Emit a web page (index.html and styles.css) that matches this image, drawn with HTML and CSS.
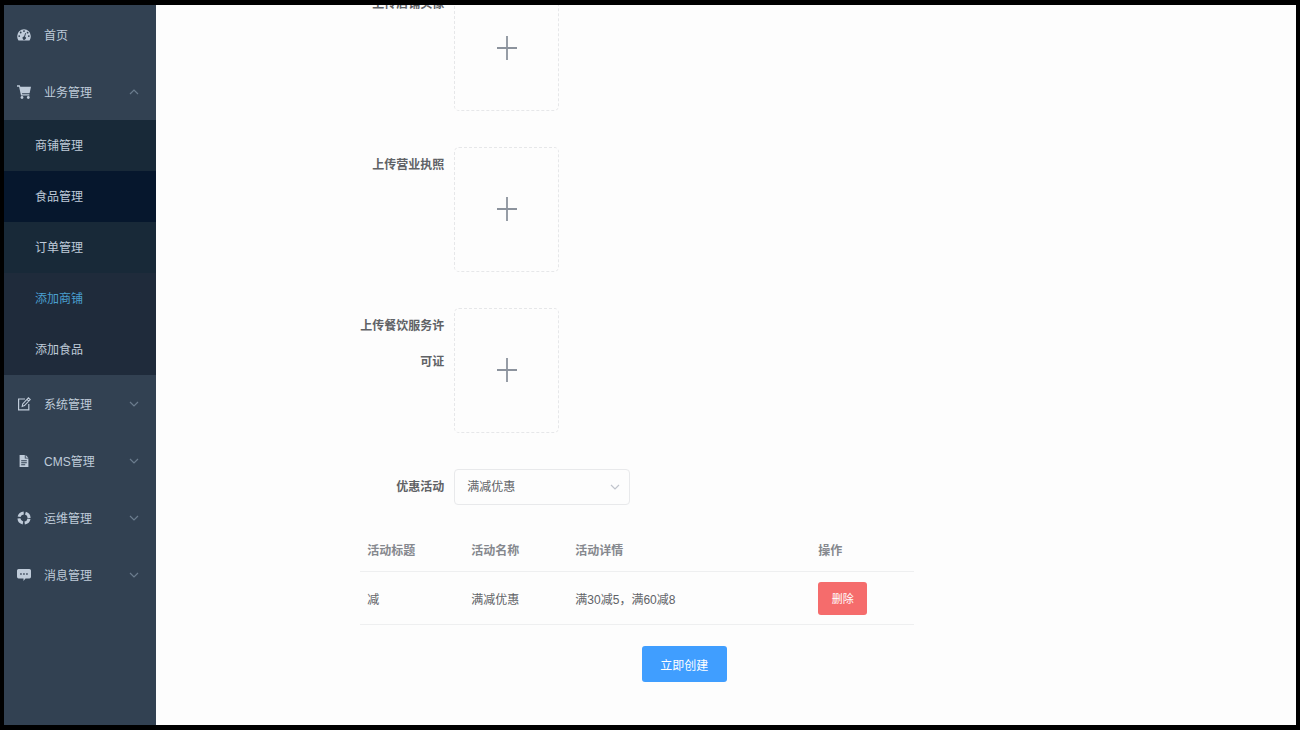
FILE: index.html
```
<!DOCTYPE html>
<html lang="zh-CN">
<head>
  <meta charset="UTF-8" />
  <meta name="viewport" content="width=device-width, initial-scale=1.0" />
  <title>添加商铺</title>
  <link rel="stylesheet" href="styles.css">
</head>
<body>
  <svg class="sprite" aria-hidden="true">
    <symbol id="arrow" viewBox="0 0 10 6"><path d="M1 1l4 4 4-4" fill="none" stroke="currentColor" stroke-width="1.2" /></symbol>
    <symbol id="plus" viewBox="0 0 20 24"><path d="M10 0v24M0 12h20" fill="none" stroke="currentColor" stroke-width="1.8" /></symbol>
  </svg>
  <div class="frame">
    <nav class="sidebar">
      <a href="#" class="item">
        <svg class="icon" viewBox="0 0 14 14"><path fill="currentColor" fill-rule="evenodd" d="M7 1.2a6.8 6.8 0 0 0-6.8 6.8c0 1.7.5 3.2 1.3 4.5h11c.8-1.3 1.3-2.8 1.3-4.5A6.8 6.8 0 0 0 7 1.2zM7 2.2a.9.9 0 1 1 0 1.8.9.9 0 0 1 0-1.8zM3.7 3.6a.9.9 0 1 1 0 1.8.9.9 0 0 1 0-1.8zM10.6 3.8a.9.9 0 1 1 0 1.8.9.9 0 0 1 0-1.8zM2.2 7.2a.9.9 0 1 1 0 1.8.9.9 0 0 1 0-1.8zM11.8 7.2a.9.9 0 1 1 0 1.8.9.9 0 0 1 0-1.8zM8.2 5l.8.3-1 3.4a1.6 1.6 0 1 1-.9-.2z" /></svg>
        <span>首页</span>
      </a>
      <a href="#" class="item">
        <svg class="icon" viewBox="0 0 14 14"><path fill="currentColor" d="M0 .3h2.8l.5 1.5H14l-1.4 6.4H5l.2 1.1h7.2v1.3H4L2.1 1.7H0z" /><circle cx="5" cy="12.5" r="1.4" fill="currentColor" /><circle cx="11.3" cy="12.5" r="1.4" fill="currentColor" /></svg>
        <span>业务管理</span>
        <svg class="arrow up"><use href="#arrow" /></svg>
      </a>
      <div class="submenu">
        <a href="#">商铺管理</a>
        <a href="#" class="hover">食品管理</a>
        <a href="#">订单管理</a>
        <a href="#" class="lower active">添加商铺</a>
        <a href="#" class="lower">添加食品</a>
      </div>
      <a href="#" class="item">
        <svg class="icon" viewBox="0 0 14 14"><path fill="none" stroke="currentColor" stroke-width="1.2" d="M8 2H1.6v10.8h10.2V7" /><path fill="none" stroke="currentColor" stroke-width="1.1" d="M5.2 9.4l.5-2.5L11.4.9l1.8 1.7-5.7 6zM10 2.4l1.8 1.7" /></svg>
        <span>系统管理</span>
        <svg class="arrow"><use href="#arrow" /></svg>
      </a>
      <a href="#" class="item">
        <svg class="icon" viewBox="0 0 14 14"><path fill="currentColor" fill-rule="evenodd" d="M2.6 1h5.2v3.6h3.6V13H2.6zM4.2 6.2v1h5.6v-1zM4.2 8.2v1h5.6v-1zM4.2 10.2v1h4v-1z" /><path fill="currentColor" d="M8.6 1l2.8 2.8H8.6z" /></svg>
        <span>CMS管理</span>
        <svg class="arrow"><use href="#arrow" /></svg>
      </a>
      <a href="#" class="item">
        <svg class="icon" viewBox="0 0 14 14"><circle cx="7" cy="7" r="5.1" fill="none" stroke="currentColor" stroke-width="3" stroke-dasharray="6.2 1.81" stroke-dashoffset="-.9" /></svg>
        <span>运维管理</span>
        <svg class="arrow"><use href="#arrow" /></svg>
      </a>
      <a href="#" class="item">
        <svg class="icon" viewBox="0 0 14 14"><path fill="currentColor" fill-rule="evenodd" d="M1.6 1h10.8A1.6 1.6 0 0 1 14 2.6v6.2a1.6 1.6 0 0 1-1.6 1.6H8.500L6.500 13v-2.600H1.600A1.600 1.600 0 0 1 0 8.800V2.600A1.600 1.600 0 0 1 1.600 1zM3.200 5.200v1.500h1.500V5.200zM6.200 5.200v1.500h1.500V5.200zM9.200 5.200v1.500h1.500V5.200z" /></svg>
        <span>消息管理</span>
        <svg class="arrow"><use href="#arrow" /></svg>
      </a>
    </nav>

    <main class="content">
      <form class="shop-form">
        <div class="row">
          <label for="avatar">上传店铺头像</label>
          <div class="upload">
            <svg><use href="#plus" /></svg>
            <input type="file" id="avatar" />
          </div>
        </div>
        <div class="row">
          <label for="license">上传营业执照</label>
          <div class="upload">
            <svg><use href="#plus" /></svg>
            <input type="file" id="license" />
          </div>
        </div>
        <div class="row">
          <label for="permit">上传餐饮服务许可证</label>
          <div class="upload">
            <svg><use href="#plus" /></svg>
            <input type="file" id="permit" />
          </div>
        </div>
        <div class="row">
          <label for="activity">优惠活动</label>
          <div class="select">
            <select id="activity">
              <option>满减优惠</option>
            </select>
            <svg class="arrow"><use href="#arrow" /></svg>
          </div>
        </div>
        <table>
          <thead>
            <tr>
              <th class="short">活动标题</th>
              <th class="short">活动名称</th>
              <th>活动详情</th>
              <th class="action">操作</th>
            </tr>
          </thead>
          <tbody>
            <tr>
              <td>减</td>
              <td>满减优惠</td>
              <td>满30减5，满60减8</td>
              <td><button type="button" class="delete">删除</button></td>
            </tr>
          </tbody>
        </table>
        <div class="submit">
          <button type="button" class="create">立即创建</button>
        </div>
      </form>
    </main>
  </div>
</body>
</html>
```
FILE: styles.css
```
:root {
  --menu: #324152;
  --submenu: #182938;
  --submenu-low: #1f2b3b;
  --menu-text: #bfcbd9;
  --line: #eeeff0;
  --text: #606266;
  --label-width: 94px;
}

* {
  margin: 0;
  padding: 0;
  box-sizing: border-box;
}

body {
  background: #000;
  color: var(--text);
  font-family: "Liberation Sans", "Noto Sans CJK SC", sans-serif;
  font-size: 12px;
}

button, select {
  font: inherit;
}

.sprite {
  display: none;
}

.frame {
  display: flex;
  height: 100vh;
  padding: 5px 4px;
}

/* sidebar */
.sidebar {
  flex: none;
  width: 152px;
  padding-top: 1px;
  background: var(--menu);
  overflow: hidden;
}

.sidebar a {
  color: var(--menu-text);
  text-decoration: none;
}

.item {
  display: flex;
  align-items: center;
  gap: 13px;
  height: 57px;
  padding: 0 17px 0 13px;
}

.icon {
  flex: none;
  width: 14px;
  height: 14px;
}

.arrow {
  width: 10px;
  height: 6px;
  color: #6b7c8e;
}

.item .arrow {
  margin-left: auto;
}

.arrow.up {
  transform: rotate(180deg);
}

.submenu a {
  display: block;
  height: 51px;
  padding-left: 31px;
  line-height: 53px;
  background: var(--submenu);
}

.submenu .hover {
  background: #06172d;
}

.submenu .lower {
  background: var(--submenu-low);
}

.submenu .active {
  color: #4a9fcf;
}

.content {
  flex: 1;
  display: flex;
  flex-direction: column;
  justify-content: flex-end;
  padding: 0 16px 43px;
  background: #fdfdfd;
  overflow: hidden;
}

.shop-form {
  width: 50%;
  margin-left: 17%;
}

.row {
  display: flex;
  align-items: flex-start;
  margin-bottom: 36px;
}

.row label {
  flex: none;
  width: var(--label-width);
  padding-right: 10px;
  line-height: 36px;
  font-weight: bold;
  text-align: right;
}

.upload {
  position: relative;
  display: flex;
  align-items: center;
  justify-content: center;
  width: 105px;
  height: 125px;
  border: 1px dashed #e6e7e9;
  border-radius: 5px;
}

.upload svg {
  width: 20px;
  height: 24px;
  color: #8c939d;
}

.upload input {
  position: absolute;
  inset: 0;
  width: 100%;
  opacity: 0;
  cursor: pointer;
}

.select {
  position: relative;
  width: 176px;
}

.select select {
  display: block;
  width: 100%;
  height: 36px;
  padding: 0 12px;
  border: 1px solid #e8e9eb;
  border-radius: 4px;
  background: transparent;
  color: var(--text);
  appearance: none;
}

.select .arrow {
  position: absolute;
  top: 15px;
  right: 10px;
  color: #c0c4cc;
  pointer-events: none;
}

table {
  width: 100%;
  margin-top: -12px;
  border-collapse: collapse;
  table-layout: fixed;
}

th, td {
  padding: 0 7px;
  border-bottom: 1px solid var(--line);
  text-align: left;
}

th {
  height: 43px;
  color: #85888e;
}

td {
  height: 53px;
}

.short {
  width: 104px;
}

.action {
  width: 103px;
}

.delete, .create {
  border: none;
  border-radius: 3px;
  color: #fff;
  cursor: pointer;
}

.delete {
  display: block;
  width: 49px;
  height: 33px;
  background: #f56c6c;
  font-size: 11px;
}

.create {
  width: 85px;
  height: 36px;
  background: #409eff;
}

.submit {
  display: flex;
  justify-content: center;
  margin-top: 21px;
  padding-left: var(--label-width);
}
```
